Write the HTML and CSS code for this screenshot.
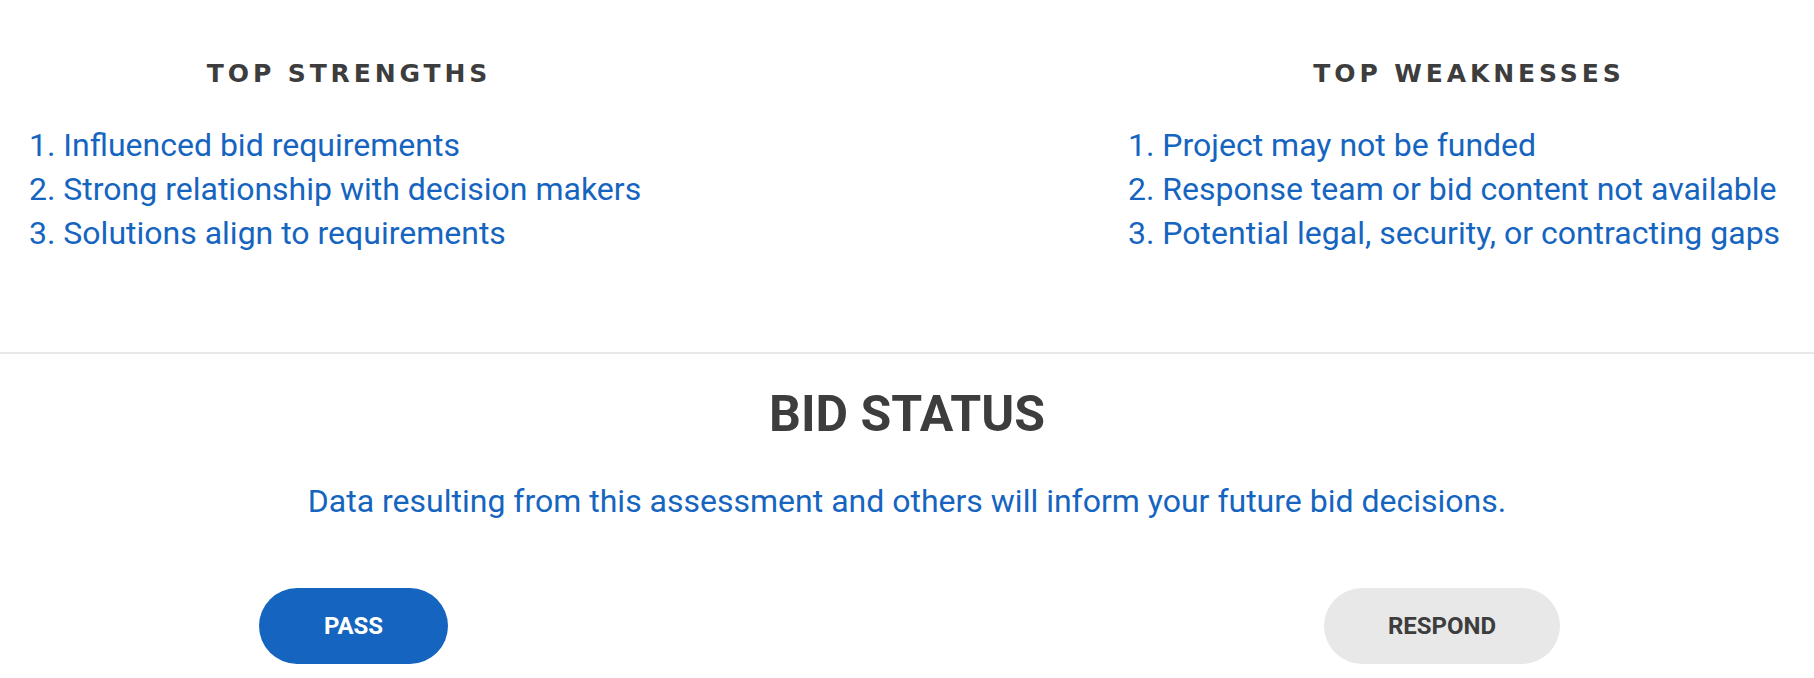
FILE: index.html
```html
<!DOCTYPE html>
<html lang="en">
<head>
    <meta charset="UTF-8">
    <meta name="viewport" content="width=device-width, initial-scale=1.0">
    <title>Bid Assessment - Results</title>
    <link rel="stylesheet" href="styles.css">
</head>
<body>
    <!-- Punti di forza e debolezze -->
    <div class="summary">
        <div class="column strengths">
            <h2>Top Strengths</h2>
            <ol class="points">
                <li>1. Influenced bid requirements</li>
                <li>2. Strong relationship with decision makers</li>
                <li>3. Solutions align to requirements</li>
            </ol>
        </div>
        <div class="column weaknesses">
            <h2>Top Weaknesses</h2>
            <ol class="points">
                <li>1. Project may not be funded</li>
                <li>2. Response team or bid content not available</li>
                <li>3. Potential legal, security, or contracting gaps</li>
            </ol>
        </div>
    </div>

    <!-- Stato della gara -->
    <div class="status">
        <h1>BID STATUS</h1>
        <p class="note">Data resulting from this assessment and others will inform your future bid decisions.</p>
        <div class="actions">
            <button class="btn btn-pass">PASS</button>
            <button class="btn btn-respond">RESPOND</button>
        </div>
    </div>
</body>
</html>
```

FILE: styles.css
```css
/* Base */
body {
    font-family: Roboto, "Liberation Sans", sans-serif;
    background-color: #fff;
    margin: 0;
    padding: 0;
    color: #3d3d3d;
}

/* Punti di forza / debolezze */
.summary {
    display: grid;
    grid-template-columns: 640px 682px;
    justify-content: space-between;
    padding: 62px 4px 0 29px;
    height: 290px;
    border-bottom: 2px solid #e8e8e8;
}

.column h2 {
    font-family: "DejaVu Sans", sans-serif;
    font-weight: bold;
    font-size: 25px;
    letter-spacing: 3.9px;
    text-transform: uppercase;
    text-align: center;
    color: #3d3d3d;
    margin: 0 0 37px 0;
    line-height: 24px;
}

.points {
    list-style: none;
    margin: 0;
    padding: 0;
}

.points li {
    font-size: 32px;
    line-height: 44px;
    color: #1565c0;
}

/* Stato */
.status {
    text-align: center;
}

.status h1 {
    font-size: 50px;
    font-weight: bold;
    margin: 30px 0 0 0;
    line-height: 60px;
    color: #3d3d3d;
}

.note {
    font-size: 32px;
    color: #1565c0;
    margin: 38px 0 0 0;
    line-height: 38px;
}

.actions {
    display: flex;
    justify-content: space-between;
    padding: 0 254px 0 259px;
    margin-top: 68px;
}

.btn {
    font-family: Roboto, sans-serif;
    font-weight: bold;
    font-size: 24px;
    border: none;
    border-radius: 38px;
    height: 76px;
    cursor: pointer;
}

.btn-pass {
    background-color: #1565c0;
    color: #fff;
    width: 189px;
}

.btn-respond {
    background-color: #e8e8e8;
    color: #3d3d3d;
    width: 236px;
}
```
